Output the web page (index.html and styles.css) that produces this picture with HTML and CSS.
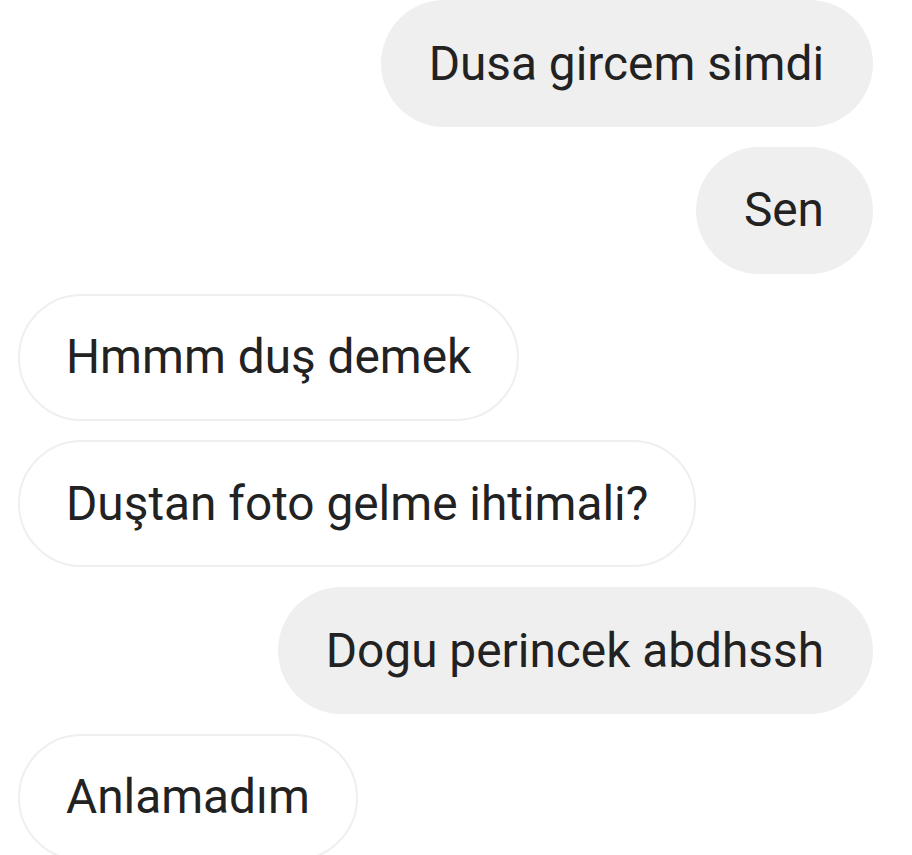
FILE: index.html
```html
<!DOCTYPE html>
<html lang="tr">
<head>
<meta charset="utf-8">
<link rel="stylesheet" href="styles.css">
</head>
<body>
<div class="thread">
  <div class="msg out">Dusa gircem simdi</div>
  <div class="msg out">Sen</div>
  <div class="msg in">Hmmm duş demek</div>
  <div class="msg in">Duştan foto gelme ihtimali?</div>
  <div class="msg out">Dogu perincek abdhssh</div>
  <div class="msg in">Anlamadım</div>
</div>
</body>
</html>
```
FILE: styles.css
```css
html, body {
  margin: 0;
  padding: 0;
  background: #ffffff;
}
body {
  width: 912px;
  height: 855px;
  overflow: hidden;
  font-family: Roboto, "Noto Sans", sans-serif;
}
.thread {
  display: flex;
  flex-direction: column;
  gap: 19.8px;
  padding: 0 39px 0 18px;
}
.msg {
  box-sizing: border-box;
  height: 127px;
  display: flex;
  align-items: center;
  padding: 0 49px 0 48px;
  border-radius: 64px;
  font-size: 47.8px;
  color: #222222;
  white-space: nowrap;
}
.out {
  align-self: flex-end;
  background: #efefef;
}
.in {
  align-self: flex-start;
  background: #ffffff;
  border: 2px solid #efefef;
  padding: 0 46px 0 46px;
}
```
